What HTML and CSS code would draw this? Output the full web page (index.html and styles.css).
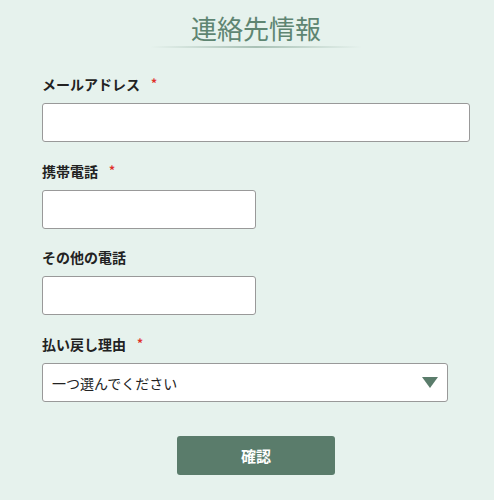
FILE: index.html
```html
<!DOCTYPE html>
<html lang="ja">
<head>
    <meta charset="UTF-8">
    <meta name="viewport" content="width=device-width, initial-scale=1.0">
    <title>連絡先情報</title>
    <link rel="stylesheet" href="styles.css">
</head>
<body>
    <div class="container">
        <h2 class="title">連絡先情報</h2>

        <form id="contactForm">
            <div class="form-group">
                <label for="email">メールアドレス<span class="req">*</span></label>
                <input type="email" id="email" name="email" class="full">
            </div>

            <div class="form-group">
                <label for="mobile">携帯電話<span class="req">*</span></label>
                <input type="tel" id="mobile" name="mobile" class="half">
            </div>

            <div class="form-group">
                <label for="other">その他の電話</label>
                <input type="tel" id="other" name="other" class="half">
            </div>

            <div class="form-group">
                <label for="reason">払い戻し理由<span class="req">*</span></label>
                <div class="select-wrap">
                    <select id="reason" name="reason">
                        <option>一つ選んでください</option>
                    </select>
                    <span class="arrow"></span>
                </div>
            </div>

            <div class="actions">
                <button type="submit">確認</button>
            </div>
        </form>
    </div>
</body>
</html>
```

FILE: styles.css
```css
body {
    margin: 0;
    background: #e6f2ed;
    font-family: "Noto Sans CJK JP", "Noto Sans", sans-serif;
    color: #222;
}
.container {
    width: 428px;
    margin-left: 42px;
}
.title {
    margin: 0 auto 25px;
    padding-top: 9px;
    width: 210px;
    height: 37px;
    text-align: center;
    font-size: 26px;
    font-weight: normal;
    line-height: 37px;
    color: #5e8572;
    border-bottom: 2px solid transparent;
    border-image: linear-gradient(to right, rgba(94, 133, 114, 0), rgba(94, 133, 114, 0.45), rgba(94, 133, 114, 0)) 1;
}
.form-group {
    margin-bottom: 18px;
}
label {
    display: block;
    font-size: 14px;
    font-weight: bold;
    line-height: 20px;
    margin-bottom: 9px;
    color: #222;
}
.req {
    color: #e0302a;
    font-size: 12px;
    margin-left: 11px;
    vertical-align: 2px;
}
input {
    box-sizing: border-box;
    height: 39px;
    padding: 8px;
    border: 1px solid #999;
    border-radius: 3px;
    background: #fff;
    display: block;
}
.full {
    width: 428px;
}
.half {
    width: 214px;
}
.select-wrap {
    position: relative;
    width: 406px;
}
select {
    box-sizing: border-box;
    width: 100%;
    height: 39px;
    padding: 0 9px;
    border: 1px solid #999;
    border-radius: 3px;
    background: #fff;
    font-family: inherit;
    font-size: 14px;
    color: #222;
    appearance: none;
    -webkit-appearance: none;
}
.arrow {
    position: absolute;
    right: 10px;
    top: 14px;
    width: 0;
    height: 0;
    border-left: 8px solid transparent;
    border-right: 8px solid transparent;
    border-top: 11px solid #5a7c6b;
    pointer-events: none;
}
.actions {
    text-align: center;
    padding-top: 16px;
}
button {
    width: 158px;
    height: 39px;
    background-color: #5a7c6b;
    color: #fff;
    border: none;
    border-radius: 3px;
    font-family: inherit;
    font-size: 15px;
    font-weight: bold;
    cursor: pointer;
}
```
